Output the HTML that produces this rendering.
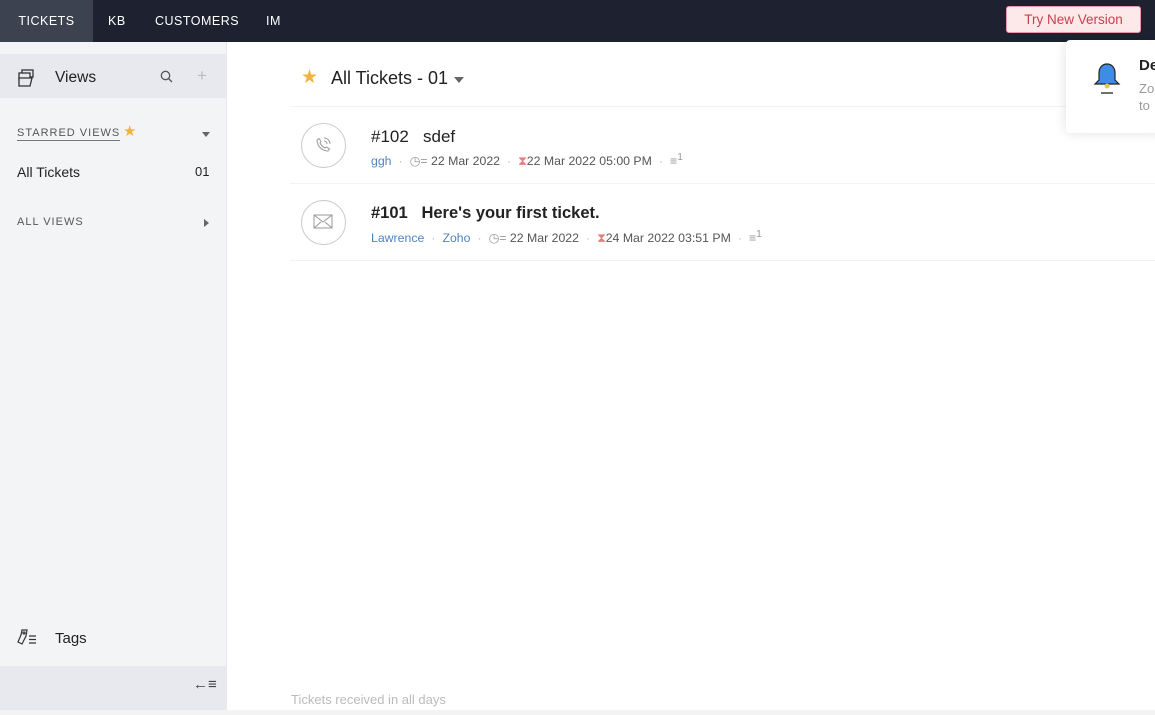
<!DOCTYPE html>
<html><head><meta charset="utf-8"><style>
*{margin:0;padding:0;box-sizing:border-box}
body{width:1155px;height:715px;overflow:hidden;background:#fff;font-family:"Liberation Sans",sans-serif;position:relative;color:#222}
.top{position:absolute;left:0;top:0;width:1155px;height:42px;background:#1e2230}
.top .tab{position:absolute;top:0;height:42px;line-height:42px;color:#fff;font-size:12.5px;letter-spacing:.5px}
.side{position:absolute;left:0;top:42px;width:227px;height:668px;background:#f3f4f6;border-right:1px solid #e6e7ea}
.abs{position:absolute}
.meta{position:absolute;font-size:12.3px;color:#555;white-space:nowrap}
.blue{color:#4f83c4}
.dot{color:#bbb;margin:0 7px}
.circ{position:absolute;width:45px;height:45px;border:1px solid #ccc;border-radius:50%}
</style></head><body>
<div class="top">
 <div class="tab" style="left:0;width:93px;background:#3d4250;text-align:center">TICKETS</div>
 <div class="tab" style="left:108px">KB</div>
 <div class="tab" style="left:155px">CUSTOMERS</div>
 <div class="tab" style="left:266px">IM</div>
 <div class="abs" style="left:1006px;top:6px;width:135px;height:27px;background:#fde8ea;border:1px solid #e89aa2;border-radius:3px;color:#c8404c;font-size:13.5px;text-align:center;line-height:25px">Try New Version</div>
</div>
<div class="side">
 <div class="abs" style="left:0;top:12px;width:227px;height:44px;background:#e8e9ee"></div>
 <svg class="abs" style="left:18px;top:27px" width="18" height="18" viewBox="0 0 18 18" fill="none" stroke="#333" stroke-width="1.3"><rect x="4" y="1" width="11" height="7"/><rect x="1" y="4" width="11" height="7" fill="#e8e9ee"/><path d="M1 9h13l-2 8H1z" fill="#e8e9ee"/></svg>
 <div class="abs" style="left:55px;top:27px;font-size:15.5px">Views</div>
 <svg class="abs" style="left:160px;top:28px" width="13" height="13" viewBox="0 0 13 13" fill="none" stroke="#555" stroke-width="1.3"><circle cx="5.5" cy="5.5" r="4.2"/><path d="M8.5 8.5l3.5 3.5"/></svg>
 <div class="abs" style="left:197px;top:24px;font-size:17px;color:#bbb">+</div>
 <div class="abs" style="left:17px;top:85px;font-size:11px;letter-spacing:1px;color:#555;border-bottom:1px solid #777;padding-bottom:1px">STARRED VIEWS</div>
 <div class="abs" style="left:123px;top:80px;font-size:15px;color:#f0b43c">★</div>
 <div class="abs" style="left:202px;top:90px;border:4px solid transparent;border-top:5px solid #666"></div>
 <div class="abs" style="left:17px;top:122px;font-size:14px">All Tickets</div>
 <div class="abs" style="left:195px;top:122px;font-size:13px">01</div>
 <div class="abs" style="left:17px;top:174px;font-size:11px;letter-spacing:1px;color:#555">ALL VIEWS</div>
 <div class="abs" style="left:204px;top:177px;border:4px solid transparent;border-left:5px solid #666;border-right:0"></div>
 <svg class="abs" style="left:17px;top:587px" width="21" height="16" viewBox="0 0 21 16" fill="none" stroke="#333" stroke-width="1.2"><path d="M5 1h5l-1 6-4 8-4-2 3-7z"/><circle cx="7" cy="4" r="1"/><path d="M12 7h7M12 10.5h7M12 14h7"/></svg>
 <div class="abs" style="left:55px;top:588px;font-size:15px">Tags</div>
 <div class="abs" style="left:0;top:624px;width:227px;height:44px;background:#e8e9ee"></div>
 <div class="abs" style="left:193px;top:634px;font-size:15px;color:#444">←≡</div>
</div>
<div class="abs" style="left:301px;top:66px;font-size:19px;color:#f0b43c">★</div>
<div class="abs" style="left:331px;top:68px;font-size:18px">All Tickets - 01</div>
<div class="abs" style="left:454px;top:77px;border:5px solid transparent;border-top:6px solid #666"></div>
<div class="abs" style="left:290px;top:106px;width:865px;height:1px;background:#f3f3f3"></div>
<div class="circ" style="left:301px;top:123px"></div>
<svg class="abs" style="left:314px;top:136px" width="18" height="18" viewBox="0 0 18 18" fill="none" stroke="#999" stroke-width="1"><path d="M3 4c0 6 5 11 11 11l1.5-2-3-2-1.5 1c-2-1-4-3-5-5l1-1.5-2-3z"/><path d="M10 5a3 3 0 0 1 3 3M10 2a6 6 0 0 1 6 6"/></svg>
<div class="abs" style="left:371px;top:127px;font-size:17px">#102&nbsp;&nbsp;&nbsp;sdef</div>
<div class="meta" style="left:371px;top:152px"><span class="blue">ggh</span><span class="dot">·</span><span style="color:#999">◷=</span> 22 Mar 2022<span class="dot">·</span><span style="color:#e08080">⧗</span>22 Mar 2022 05:00 PM<span class="dot">·</span><span style="color:#999">≡<sup>1</sup></span></div>
<div class="abs" style="left:290px;top:183px;width:865px;height:1px;background:#f3f3f3"></div>
<div class="circ" style="left:301px;top:200px"></div>
<svg class="abs" style="left:313px;top:214px" width="20" height="15" viewBox="0 0 20 15" fill="none" stroke="#999" stroke-width="1"><rect x="1" y="1" width="18" height="13"/><path d="M1 1l9 7 9-7M1 14l7-6M19 14l-7-6"/></svg>
<div class="abs" style="left:371px;top:204px;font-size:16.5px;font-weight:bold">#101&nbsp;&nbsp;&nbsp;Here's your first ticket.</div>
<div class="meta" style="left:371px;top:229px"><span class="blue">Lawrence</span><span class="dot">·</span><span class="blue">Zoho</span><span class="dot">·</span><span style="color:#999">◷=</span> 22 Mar 2022<span class="dot">·</span><span style="color:#e08080">⧗</span>24 Mar 2022 03:51 PM<span class="dot">·</span><span style="color:#999">≡<sup>1</sup></span></div>
<div class="abs" style="left:290px;top:260px;width:865px;height:1px;background:#f3f3f3"></div>
<div class="abs" style="left:291px;top:692px;font-size:13px;color:#bbb">Tickets received in all days</div>
<div class="abs" style="left:0;top:710px;width:1155px;height:5px;background:#f3f3f3"></div>
<div class="abs" style="left:1066px;top:40px;width:100px;height:93px;background:#fff;box-shadow:0 0 12px rgba(0,0,0,.12);border-radius:4px"></div>
<svg class="abs" style="left:1093px;top:62px" width="28" height="32" viewBox="0 0 28 32"><path d="M14 2c-5 0-8 4-8 9v7l-4 4h24l-4-4v-7c0-5-3-9-8-9z" fill="#3d8ce8" stroke="#222" stroke-width="1.2"/><circle cx="14" cy="24" r="2.5" fill="#e8c35a"/><path d="M8 31h12" stroke="#222" stroke-width="1.3"/></svg>
<div class="abs" style="left:1139px;top:57px;font-size:15px;font-weight:bold">De</div>
<div class="abs" style="left:1139px;top:80px;font-size:13px;color:#999;line-height:17px">Zo<br>to</div>
</body></html>
